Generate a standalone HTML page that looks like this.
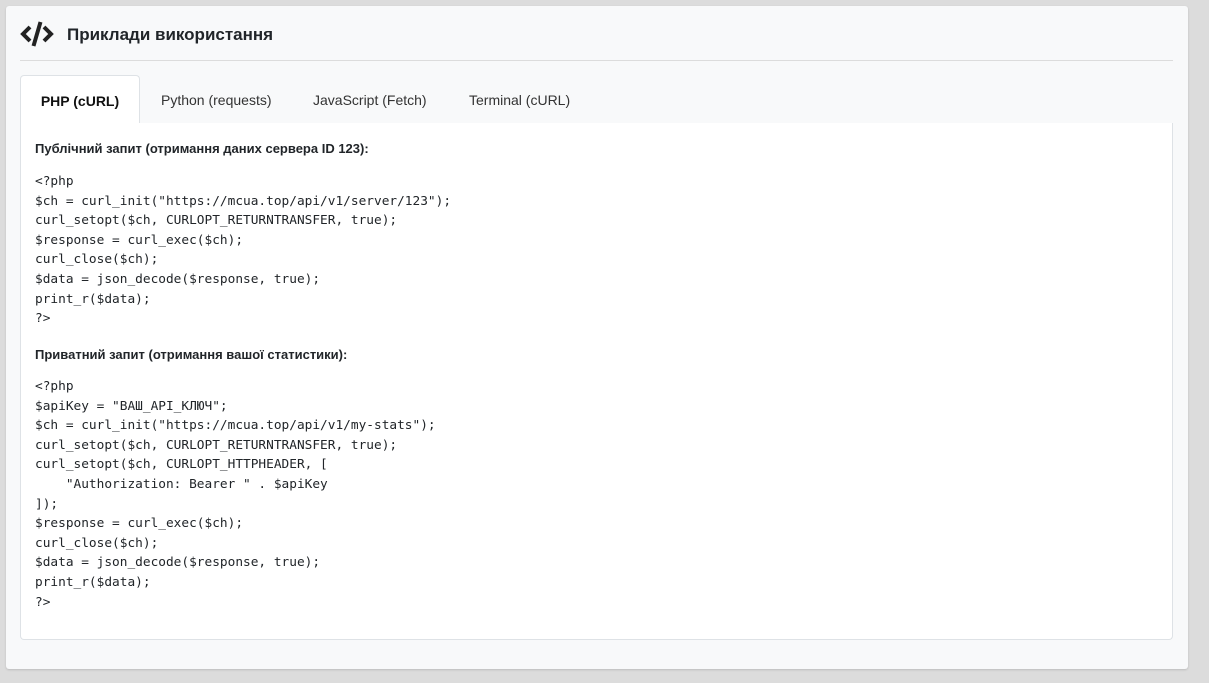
<!DOCTYPE html>
<html><head><meta charset="utf-8"><style>
body{margin:0;background:#dcdcdc;font-family:"Liberation Sans",sans-serif;width:1209px;height:683px;overflow:hidden}
.card{position:absolute;left:6px;top:6px;width:1182px;height:663px;background:#f8f9fa;border-radius:3px;box-shadow:0 1px 2px rgba(0,0,0,.15)}
.hdr{position:absolute;left:14px;top:12px;width:1153px;height:42px;border-bottom:1px solid #dcdcdc}
.hdr svg{position:absolute;left:0;top:1px}
.hdr h1{position:absolute;left:47px;top:7px;margin:0;font-size:17px;font-weight:bold;color:#212529;line-height:1.2}
.tabs{position:absolute;left:14px;top:69px;width:1153px;height:48px;border-bottom:1px solid #dee2e6}
.tab{position:absolute;top:0;height:48px;line-height:50px;font-size:14px;color:#333}
.tab.a{left:0;width:118px;border:1px solid #dee2e6;border-bottom:1px solid #fff;background:#fff;border-radius:4px 4px 0 0;text-align:center;font-weight:bold;color:#111;height:48px}
.box{position:absolute;left:14px;top:117px;width:1151px;height:516px;background:#fff;border:1px solid #dee2e6;border-top:none;border-radius:0 0 4px 4px}
.t{position:absolute;left:14px;font-size:13px;font-weight:bold;color:#212529}
pre{position:absolute;left:14px;margin:0;font-family:"DejaVu Sans Mono","Liberation Mono",monospace;font-size:12.8px;line-height:19.6px;color:#212529}
</style></head><body>
<div class="card">
<div class="hdr"><svg width="34" height="30" viewBox="0 0 34 30"><path d="M10 8 L3 15 L10 22" fill="none" stroke="#222" stroke-width="4"/><path d="M24 8 L31 15 L24 22" fill="none" stroke="#222" stroke-width="4"/><path d="M20.5 3 L13.5 27" stroke="#222" stroke-width="4"/></svg><h1>Приклади використання</h1></div>
<div class="tabs">
<div class="tab a">PHP (cURL)</div>
<div class="tab" style="left:141px">Python (requests)</div>
<div class="tab" style="left:293px">JavaScript (Fetch)</div>
<div class="tab" style="left:449px">Terminal (cURL)</div>
</div>
<div class="box">
<div class="t" style="top:18px">Публічний запит (отримання даних сервера ID 123):</div>
<pre style="top:49px">&lt;?php
$ch = curl_init("https://mcua.top/api/v1/server/123");
curl_setopt($ch, CURLOPT_RETURNTRANSFER, true);
$response = curl_exec($ch);
curl_close($ch);
$data = json_decode($response, true);
print_r($data);
?&gt;</pre>
<div class="t" style="top:224px">Приватний запит (отримання вашої статистики):</div>
<pre style="top:254px">&lt;?php
$apiKey = "ВАШ_API_КЛЮЧ";
$ch = curl_init("https://mcua.top/api/v1/my-stats");
curl_setopt($ch, CURLOPT_RETURNTRANSFER, true);
curl_setopt($ch, CURLOPT_HTTPHEADER, [
    "Authorization: Bearer " . $apiKey
]);
$response = curl_exec($ch);
curl_close($ch);
$data = json_decode($response, true);
print_r($data);
?&gt;</pre>
</div>
</div>
</body></html>
